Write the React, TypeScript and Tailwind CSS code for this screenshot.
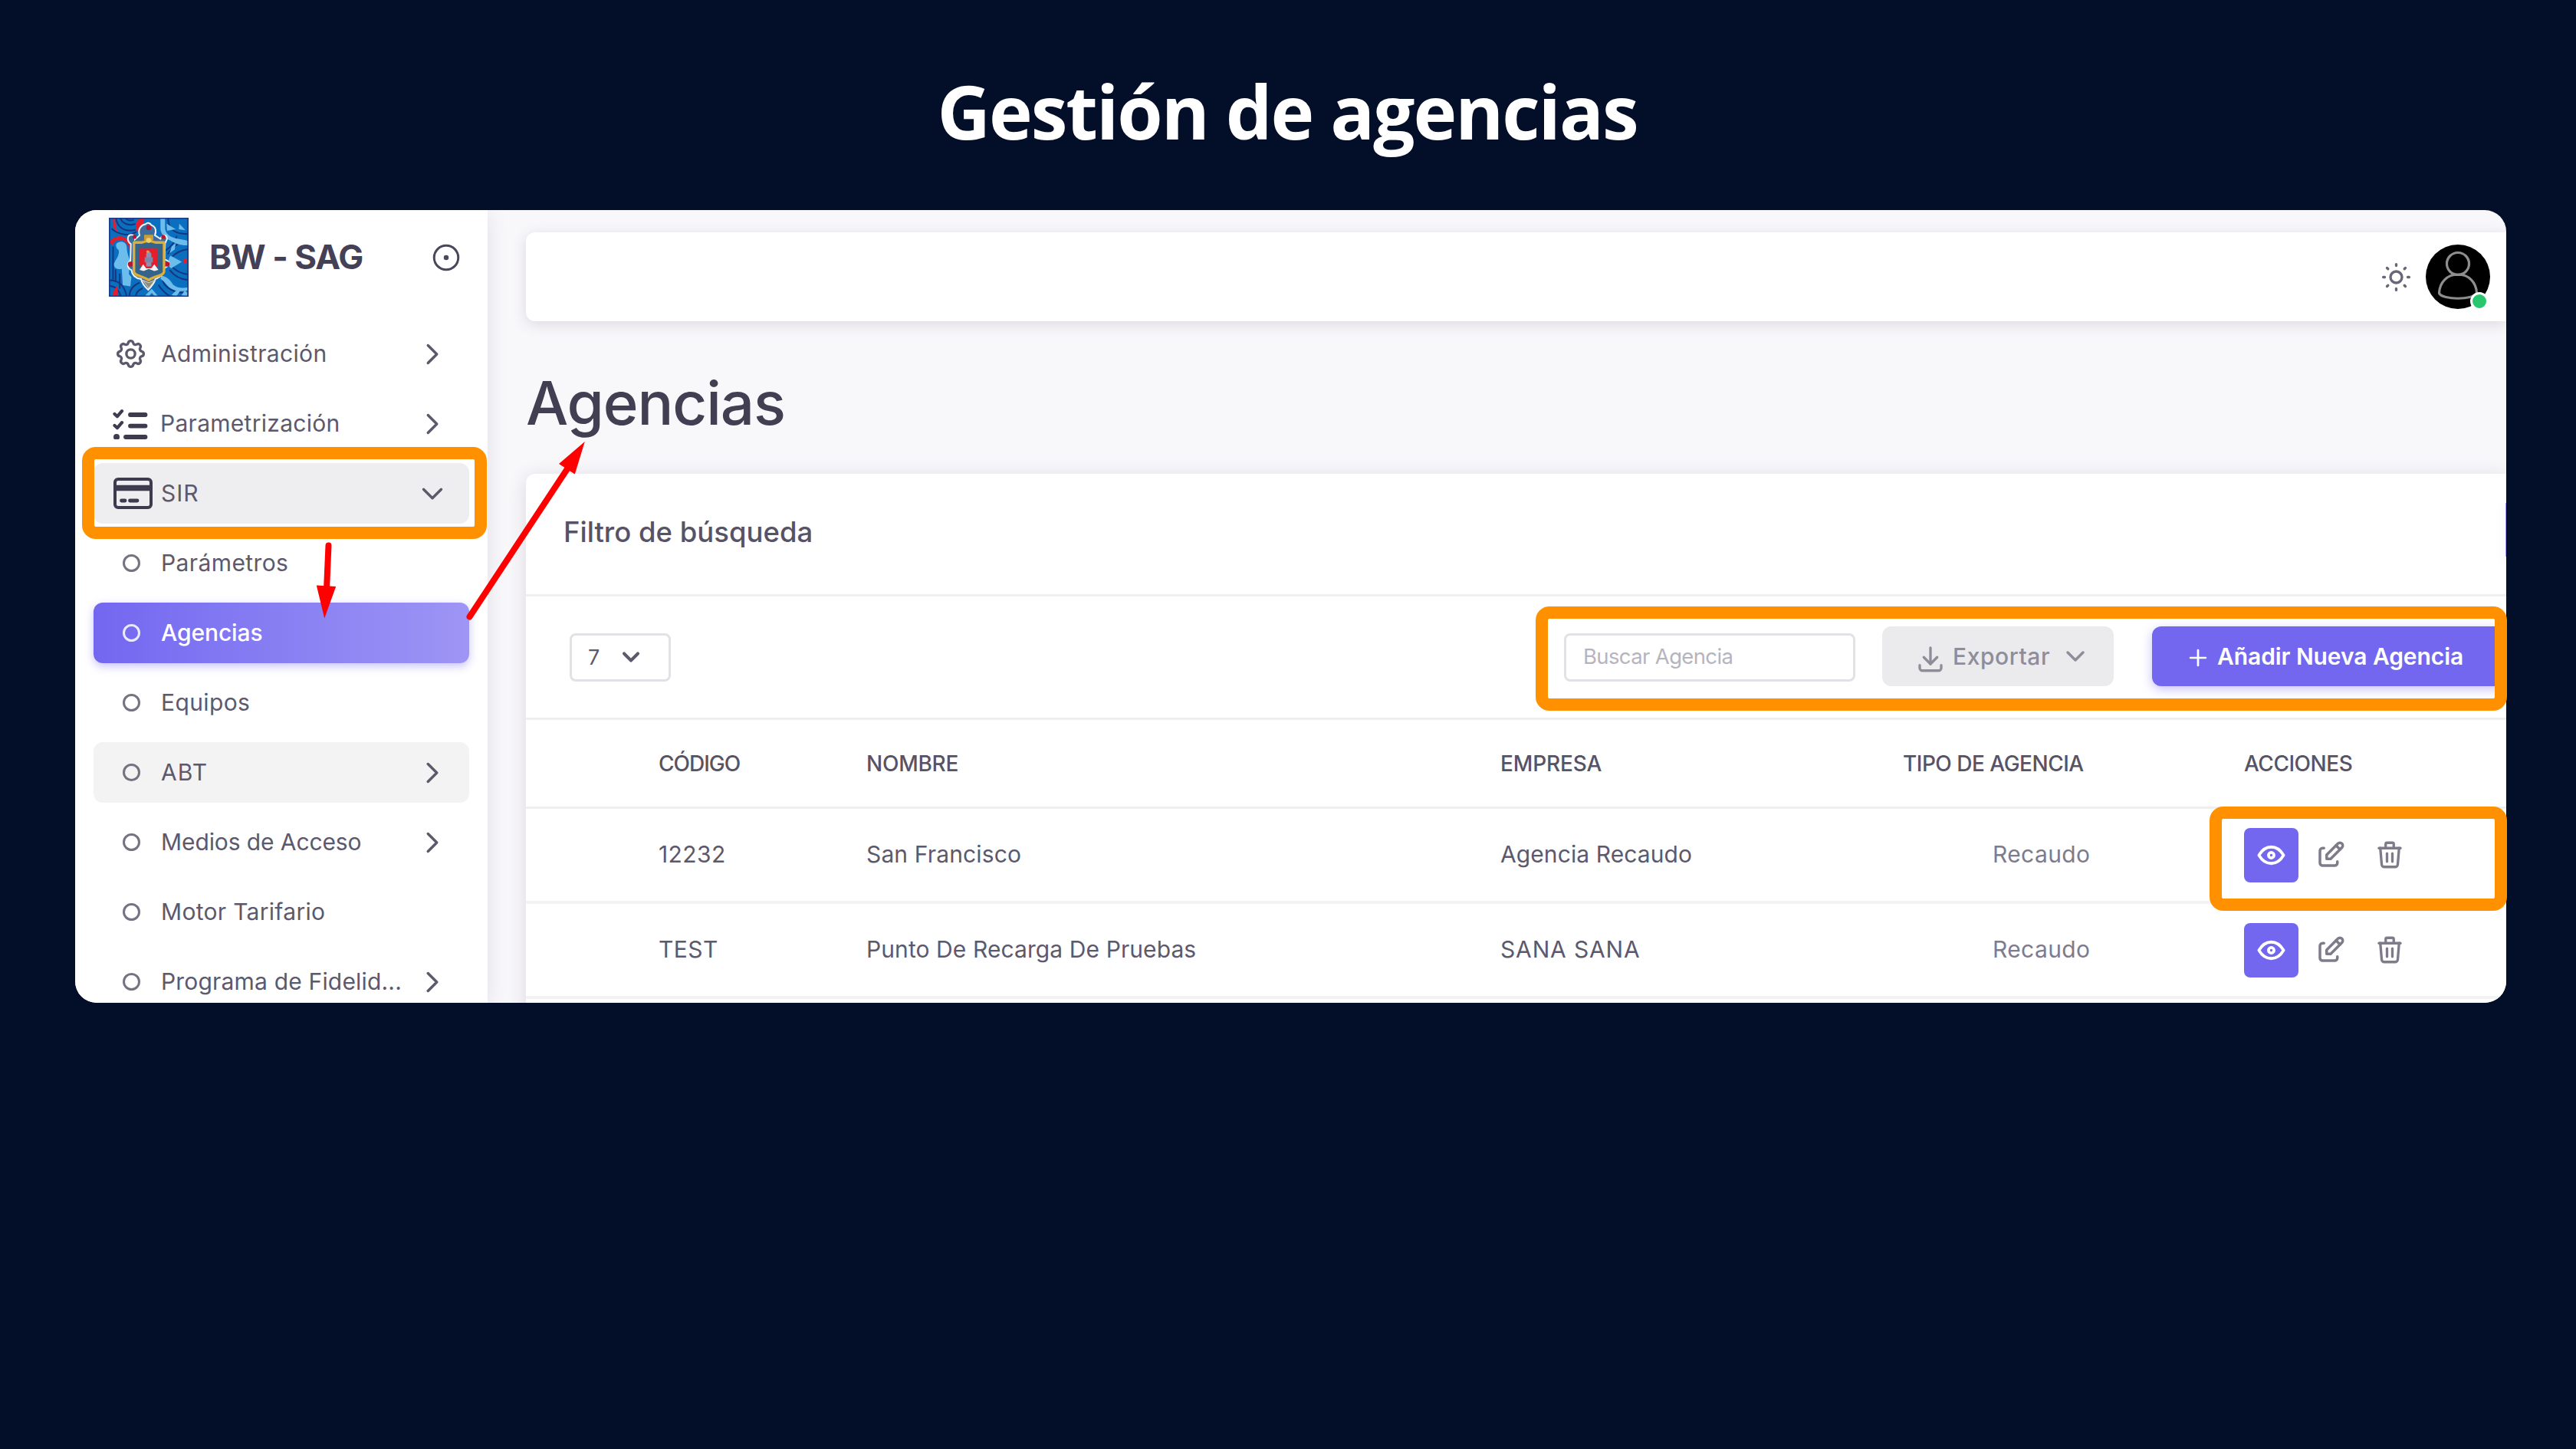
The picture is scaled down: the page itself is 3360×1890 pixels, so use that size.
import type { ReactNode } from "react";
import {
  TbChevronDown,
  TbChevronRight,
  TbCircleDot,
  TbDownload,
  TbEdit,
  TbEye,
  TbPlus,
  TbSettings,
  TbSun,
  TbTrash,
} from "react-icons/tb";

function CityCrest() {
  return (
    <svg viewBox="20 17 312 310" className="h-[103px] w-[104px] shrink-0">
      <rect x="20" y="17" width="312" height="310" fill="#0a6fbe" />
      <g fill="none" stroke="#17357f" strokeWidth="6">
        <path d="M48 17c2 40 40 62 86 44M64 17c6 22 34 34 60 24M84 17c6 10 20 14 34 8M30 60c30 26 70 30 98 12" />
        <path d="M250 160c30-40 50-50 84-52M262 176c22-26 44-34 72-36M262 204c20 22 40 34 72 36M258 222c20 26 44 38 76 40" />
        <path d="M230 262c10 30 40 50 104 52M214 280c14 24 30 36 50 48M20 262c40 0 60 20 70 66M20 284c26 2 40 16 46 44M100 328c0-26 14-46 40-56M124 328c2-16 12-28 28-34" />
        <path d="M36 130v130M46 220v50M62 236v60M252 17c0 40 20 66 80 64M286 88c-6 30-30 48-44 58" />
      </g>
      <g fill="#6cbcec">
        <path d="M50 118c16-14 38-6 40 14 0 22 6 34 12 52l-4 54 10 12-4 36-30-4-4-64c-18 4-34-6-30-22 10-20 22-34 18-52-8-6-14-16-8-26z" />
        <path d="M222 17h18v44c4 22 22 36 60 40l32 6v18c-30 2-52-8-70-18-26-10-42-30-40-54z" />
        <path d="M246 40l36 22-34 6zM296 40l24 26-26-4z" />
        <path d="M262 166l44 24-42 26c-12-6-14-40-2-50zM266 130l16-14-4 26-20 14z" />
        <path d="M226 244c24 4 36 20 46 36 20 14 36 14 60 10v12c-34 6-58 4-78-14-14-14-22-26-32-30zM166 318l22-22 26 30h-14l-12-14-12 14h-16zM266 320l22-22 12 6-16 22zM304 322l14-20 10 10v14z" />
      </g>
      <g fill="#e0202e">
        <path d="M128 34c10-18 24-18 32-10l-8 20-14 26-14-4zM22 110c20-26 60-28 78 0v34c-4-20-12-34-28-38-18-4-34 2-36 18-8-2-14-6-14-14z" />
        <path d="M34 17h10c0 24 4 42 12 58-16-8-24-30-22-58zM34 322c2-18 10-30 20-36l2 40z" />
        <circle cx="319" cy="187" r="8" />
      </g>
      <path
        d="M140 86c-8-26 6-40 24-44 8-8 18-4 22 4 16 4 22 22 14 40l22 14c8-18 24-18 26 0l-8 18-2 64c18 2 22 16 10 26l-12 8c2 22-14 34-34 42-4 16-16 30-28 42-14-12-24-24-28-42-24-4-36-16-38-36-16-6-20-26-4-36l2-66c-18-12-14-36 2-36 10 0 14 10 14 18z"
        fill="#3d6d9d"
        stroke="#f1f1f7"
        strokeWidth="6"
      />
      <g fill="#b5172f">
        <circle cx="176" cy="56" r="10" />
        <circle cx="120" cy="92" r="8" />
        <circle cx="233" cy="92" r="8" />
        <circle cx="104" cy="199" r="10" />
        <circle cx="248" cy="199" r="10" />
      </g>
      <path d="M158 84h36v20h-36z" fill="#c99c3c" />
      <path d="M118 114h32l26-8 26 8h34v116c-6 18-36 14-60 32-24-18-52-14-58-32z" fill="#35648b" stroke="#dcae3c" strokeWidth="10" strokeLinejoin="round" />
      <circle cx="176" cy="106" r="10" fill="#f0d264" />
      <path d="M140 138h72v64l-10 14h-52l-10-14z" fill="#e31f2c" />
      <path d="M166 158l10-12 10 12v50h-20z" fill="#8f92ae" />
      <path d="M160 172h32v20h-32z" fill="#7d87aa" />
      <circle cx="172" cy="150" r="5" fill="#e8a63a" />
      <path d="M140 222l14-22 12 16h20l12-16 16 22-16 4-22-8-20 8z" fill="#f4f4f8" />
      <path d="M152 262l24 10 24-10-24 32z" fill="#8c8a7a" stroke="#ded9c4" strokeWidth="3" />
      <rect x="22" y="19" width="308" height="306" fill="none" stroke="#1c3a86" strokeWidth="5" />
    </svg>
  );
}

function ChecklistIcon() {
  return (
    <svg viewBox="0 0 46 40" className="mr-0.5 h-10 w-[46px] text-[#3f3b4f]" fill="none" stroke="currentColor" strokeLinecap="round" strokeLinejoin="round">
      <path d="M2.500 7l3.500 3.200L12 3.200M2.500 22l3.500 3.200 6-7" strokeWidth="4.200" />
      <path d="M23 8h19.500M23 22.600h19.500M17 37h25.500" strokeWidth="5.800" />
      <circle cx="5" cy="37" r="4" fill="currentColor" stroke="none" />
    </svg>
  );
}

function CardIcon() {
  return (
    <svg viewBox="0 0 51 41" className="ml-[5px] h-[41px] w-[51px] shrink-0 text-[#3f3b4f]" fill="none" stroke="currentColor">
      <rect x="2" y="2" width="47" height="37" rx="4" strokeWidth="4" />
      <path d="M2 13.500h47" strokeWidth="7.500" />
      <path d="M10.500 30h4.500M21.500 30h9.500" strokeWidth="4.800" strokeLinecap="round" />
    </svg>
  );
}

function Bullet() {
  return <span className="ml-px size-[23px] rounded-full border-[3.500px] border-current opacity-85" />;
}

type NavEntry = { label: string; tracking: string; icon?: ReactNode; arrow?: "right" | "down"; tone?: string };

const entries: NavEntry[] = [
  { label: "Administración", tracking: "tracking-[0.36px] -ml-px", icon: <TbSettings className="size-[45px] stroke-[1.8]" />, arrow: "right" },
  { label: "Parametrización", tracking: "tracking-[0.28px] -ml-0.5", icon: <ChecklistIcon />, arrow: "right" },
  { label: "SIR", tracking: "tracking-[1px] -ml-px", icon: <CardIcon />, arrow: "down", tone: "bg-[#eeeef0] text-[#5d596c]" },
  { label: "Parámetros", tracking: "tracking-[0.4px] -ml-px" },
  {
    label: "Agencias",
    tracking: "tracking-[-0.1px] -ml-px font-medium",
    tone: "bg-linear-to-r from-[#7367f0] to-[#9e95f5] text-white shadow-[0_4px_12px_rgba(115,103,240,0.4)]",
  },
  { label: "Equipos", tracking: "tracking-[0.37px] -ml-px" },
  { label: "ABT", tracking: "tracking-[1px] -ml-px", arrow: "right", tone: "bg-[#f3f3f4] text-[#5d596c]" },
  { label: "Medios de Acceso", tracking: "tracking-[-0.1px] -ml-px", arrow: "right" },
  { label: "Motor Tarifario", tracking: "tracking-[0.3px] -ml-px" },
  { label: "Programa de Fidelid...", tracking: "tracking-[0.18px] -ml-px", arrow: "right" },
];

function NavRow({ entry }: { entry: NavEntry }) {
  return (
    <li className={`flex h-[79px] shrink-0 items-center rounded-xl pr-[25px] ${entry.tone ?? "text-[#5d596c]"}`}>
      <span className="flex w-[89px] items-center justify-center pl-2">{entry.icon ?? <Bullet />}</span>
      <span className={`-mt-0.5 grow text-[30px] leading-none whitespace-nowrap ${entry.tracking}`}>{entry.label}</span>
      {entry.arrow === "right" && <TbChevronRight className="size-[46px] stroke-[1.8]" />}
      {entry.arrow === "down" && <TbChevronDown className="size-[46px] stroke-[1.8]" />}
    </li>
  );
}

function Sidebar() {
  return (
    <aside className="relative z-10 flex w-[538px] shrink-0 flex-col bg-white shadow-[0_4px_24px_rgba(75,70,92,0.13)]">
      <div className="flex h-[148px] shrink-0 items-start pt-[10px] pr-[33px] pl-11 text-[#4b465c]">
        <CityCrest />
        <span className="mt-[29px] ml-[27px] grow text-[44px] leading-none font-bold tracking-[-1px] whitespace-nowrap text-[#444055]">BW - SAG</span>
        <TbCircleDot className="mt-[31px] size-[42px] stroke-[1.7]" />
      </div>
      <ul className="flex flex-col gap-3 pr-6 pl-6">
        {entries.map((entry) => (
          <NavRow key={entry.label} entry={entry} />
        ))}
      </ul>
    </aside>
  );
}

function Topbar() {
  return (
    <header className="flex h-[116px] shrink-0 items-center justify-end rounded-l-xl bg-white pr-[21px] text-[#6a6679] shadow-[0_4px_18px_rgba(75,70,92,0.16)]">
      <TbSun className="mr-4 size-[45px] stroke-[1.8]" />
      <span className="relative block size-[84px] rounded-full bg-black">
        <svg viewBox="0 0 84 84" className="size-full" fill="none" stroke="#8e8e8e" strokeWidth="3.200">
          <circle cx="42" cy="25" r="14.500" />
          <path d="M17.500 63.500C18 49 28 39 42 39s24 10 24.500 24.500c-4 9-45 9-49 0z" />
        </svg>
        <span className="absolute right-0.5 -bottom-0.5 size-6 rounded-full border-[3px] border-white bg-[#28c76f]" />
      </span>
    </header>
  );
}

function Toolbar() {
  return (
    <div className="flex h-[161px] items-center border-b-[3px] border-[#efeef0] pl-[57px]">
      <button className="flex h-[63px] w-[132px] items-center rounded-lg border-[3px] border-[#e2e1e5] pl-[21px] text-[27px] leading-none text-[#5d596c]">
        7
        <TbChevronDown className="ml-[23px] size-9 stroke-[2.7]" />
      </button>
      <div className="ml-[1165px] flex h-[63px] w-[380px] items-center rounded-lg border-[3px] border-[#e2e1e5] pl-[22px] text-[27.500px] leading-none tracking-[-0.64px] text-[#b6b4be]">
        Buscar Agencia
      </div>
      <button className="-mt-0.5 ml-[35px] flex h-[78px] w-[302px] items-center rounded-xl bg-[#ebebed] pl-[42px] text-[30px] leading-none font-medium tracking-[0.57px] text-[#8f8d9a]">
        <TbDownload className="size-[42px] translate-y-[3px] stroke-[1.9]" />
        <span className="ml-2">Exportar</span>
        <TbChevronDown className="ml-[13px] size-10 stroke-[2.1]" />
      </button>
      <button className="-mt-0.5 ml-[50px] flex h-[78px] w-[460px] items-center rounded-xl bg-[#7367f0] pl-[43px] text-[30px] leading-none font-semibold tracking-[-0.08px] whitespace-nowrap text-white shadow-[0_4px_14px_rgba(115,103,240,0.4)]">
        <TbPlus className="size-[34px] translate-y-0.5 stroke-[1.9]" />
        <span className="ml-2">Añadir Nueva Agencia</span>
      </button>
    </div>
  );
}

const agencies = [
  { code: "12232", codeStyle: "tracking-[0.42px]", name: "San Francisco", nameStyle: "tracking-[0.14px]", company: "Agencia Recaudo", companyStyle: "tracking-[0.09px]", kind: "Recaudo" },
  { code: "TEST", codeStyle: "tracking-[0.45px]", name: "Punto De Recarga De Pruebas", nameStyle: "tracking-[0.09px]", company: "SANA SANA", companyStyle: "tracking-[0.85px]", kind: "Recaudo" },
];

function AgencyTable() {
  return (
    <div className="leading-none whitespace-nowrap text-[#5d596c]">
      <div className="grid h-[116px] grid-cols-[271px_827px_525px_445px_1fr] items-center border-b-[3px] border-[#efeef0] pl-[173px] text-[28px] font-medium text-[#575366]">
        <span className="tracking-[-1px]">CÓDIGO</span>
        <span className="tracking-[-0.25px]">NOMBRE</span>
        <span className="tracking-[-0.15px]">EMPRESA</span>
        <span className="tracking-[-0.5px]">TIPO DE AGENCIA</span>
        <span className="tracking-[-0.48px]">ACCIONES</span>
      </div>
      {agencies.map((agency) => (
        <div key={agency.code} className="grid h-[124px] grid-cols-[271px_827px_525px_445px_1fr] items-center border-b-4 border-[#f3f3f4] pl-[173px] text-[30px]">
          <span className={`-mt-[3px] ${agency.codeStyle}`}>{agency.code}</span>
          <span className={`-mt-[3px] ${agency.nameStyle}`}>{agency.name}</span>
          <span className={`-mt-[3px] ${agency.companyStyle}`}>{agency.company}</span>
          <span className="-mt-[3px] pl-[117px] tracking-[0.38px] text-[#7f7b8a]">{agency.kind}</span>
          <span className="flex items-center text-[#7f7b8a]">
            <span className="flex size-[71px] items-center justify-center rounded-lg bg-[#7367f0] text-white">
              <TbEye className="size-[43px] stroke-[2.1]" />
            </span>
            <TbEdit className="ml-[21px] size-[42px] stroke-[2]" />
            <TbTrash className="ml-[35px] size-[42px] stroke-[1.9]" />
          </span>
        </div>
      ))}
    </div>
  );
}

function AppScreen() {
  return (
    <div className="flex size-full overflow-hidden rounded-[28px] bg-[#f8f7fa]">
      <Sidebar />
      <main className="flex grow flex-col pt-[29px] pl-[50px]">
        <Topbar />
        <h1 className="h-[199px] shrink-0 pt-[15px] text-[78px] leading-[184px] font-medium tracking-[-1.1px] text-[#433f52]">Agencias</h1>
        <section className="h-[760px] shrink-0 rounded-tl-xl bg-white shadow-[0_4px_24px_rgba(75,70,92,0.16)]">
          <div className="flex h-[160px] items-center justify-between border-b-[3px] border-[#efeef0] pb-1 pl-[49px]">
            <span className="text-[36.500px] leading-none font-medium text-[#575366]">Filtro de búsqueda</span>
            <span className="-mt-2 h-[70px] w-px bg-[#a49cf5] shadow-[0_4px_12px_rgba(115,103,240,0.4)]" />
          </div>
          <Toolbar />
          <AgencyTable />
        </section>
      </main>
    </div>
  );
}

function Annotations() {
  return (
    <div className="pointer-events-none absolute inset-0 z-20">
      <div className="absolute top-[309px] left-[9px] h-[120px] w-[528px] rounded-[18px] border-16 border-[#ff9100]" />
      <div className="absolute top-[517px] left-[1905px] h-[136px] w-[1267px] rounded-[18px] border-16 border-[#ff9100]" />
      <div className="absolute top-[778px] left-[2784px] h-[136px] w-[388px] rounded-[18px] border-16 border-[#ff9100]" />
      <svg viewBox="0 0 3171 1034" className="absolute inset-0 size-full" fill="#ff0000" stroke="#ff0000" strokeLinecap="round">
        <path d="M330.500 437.500L328 495" strokeWidth="8" />
        <path d="M314.800 489.500L340.200 491L325.200 532.500Z" stroke="none" />
        <path d="M514.500 530.500L643 336" strokeWidth="8" />
        <path d="M664.800 302L651.800 344.500L631 331Z" stroke="none" />
      </svg>
    </div>
  );
}

export default function App() {
  return (
    <div className="flex h-[1890px] w-[3360px] flex-col overflow-hidden bg-[#030e28] font-['Inter',sans-serif]">
      <h2 className="h-[274px] pr-0.5 text-center font-['Open_Sans',sans-serif] text-[96px] leading-[289px] font-bold tracking-[-2px] text-white">Gestión de agencias</h2>
      <div className="relative ml-[98px] h-[1034px] w-[3171px]">
        <AppScreen />
        <Annotations />
      </div>
    </div>
  );
}
